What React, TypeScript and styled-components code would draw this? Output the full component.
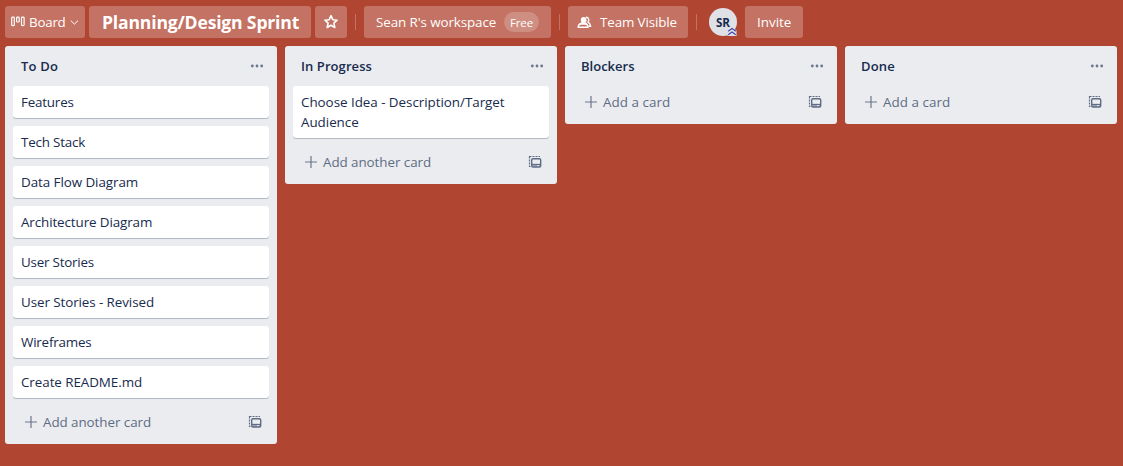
import React from "react";
import styled, { createGlobalStyle } from "styled-components";

const GlobalStyle = createGlobalStyle`
  * { box-sizing: border-box; }
  body {
    margin: 0;
    background: #b04632;
    color: #172b4d;
    font-family: "Open Sans", "Noto Sans", sans-serif;
    font-size: 13.4px;
    line-height: 20px;
    overflow: hidden;
  }
`;

const Board = styled.main`
  min-height: 466px;
`;

const Toolbar = styled.header`
  display: flex;
  align-items: center;
  height: 46px;
  padding: 6px 5px 8px;
  color: #fff;
`;

const ToolButton = styled.button<{ $width: number; $inset: number; $gap?: number }>`
  display: flex;
  align-items: center;
  flex: none;
  gap: ${(p) => p.$gap ?? 0}px;
  width: ${(p) => p.$width}px;
  height: 32px;
  margin-right: 4px;
  padding: 0 0 0 ${(p) => p.$inset}px;
  border: 0;
  border-radius: 3px;
  background: rgba(255, 255, 255, 0.24);
  color: #fff;
  font: inherit;
  white-space: nowrap;
`;

const Label = styled.span<{ $track?: number }>`
  letter-spacing: ${(p) => p.$track ?? 0}px;
  white-space: nowrap;
`;

const BoardTitle = styled.h1`
  margin: 0;
  font-size: 17.6px;
  font-weight: 700;
  line-height: 24px;
  letter-spacing: -0.19px;
`;

const Divider = styled.span<{ $after: number }>`
  flex: none;
  width: 1px;
  height: 16px;
  margin: 0 ${(p) => p.$after}px 0 4px;
  background: rgba(255, 255, 255, 0.24);
`;

const Plan = styled.span`
  width: 35px;
  height: 20px;
  margin-left: auto;
  margin-right: 12px;
  border-radius: 10px;
  background: rgba(255, 255, 255, 0.2);
  font-size: 11.5px;
  line-height: 21px;
  letter-spacing: -0.15px;
  text-align: center;
`;

const Avatar = styled.span`
  position: relative;
  flex: none;
  width: 28px;
  height: 28px;
  margin-right: 8px;
  border-radius: 50%;
  background: #dfe1e6;
  color: #172b4d;
  font-size: 11.7px;
  font-weight: 700;
  line-height: 29px;
  text-align: center;
`;

const AdminBadge = styled.svg`
  position: absolute;
  right: 0;
  bottom: 0;
`;

const Lists = styled.div`
  display: flex;
  align-items: flex-start;
  gap: 8px;
  padding: 0 5px;
`;

const ListPanel = styled.section`
  flex: none;
  width: 272px;
  padding: 0 8px;
  border-radius: 3px;
  background: #ebecf0;
`;

const ListHeader = styled.div`
  display: flex;
  align-items: center;
  justify-content: space-between;
  height: 40px;
  padding: 0 5px 0 8px;
`;

const ListTitle = styled.h2<{ $track?: number }>`
  margin: 0;
  font-size: 13px;
  font-weight: 600;
  line-height: 20px;
  letter-spacing: ${(p) => p.$track ?? 0}px;
`;

const Card = styled.article<{ $track?: number }>`
  margin-bottom: 8px;
  padding: 6px 8px;
  border-radius: 3px;
  background: #fff;
  box-shadow: 0 1px 0 rgba(9, 30, 66, 0.25);
  letter-spacing: ${(p) => p.$track ?? 0}px;
`;

const ListFooter = styled.div`
  display: flex;
  align-items: center;
  gap: 6px;
  height: 38px;
  padding: 0 7px 6px 12px;
  color: #5e6c84;
`;

const TemplateIcon = styled.svg`
  margin-left: auto;
`;

const BoardGlyph = () => (
  <svg width="14" height="12" viewBox="0 0 14 12" fill="none" stroke="#fff" strokeWidth="1.2">
    <rect x="0.7" y="1.2" width="2.6" height="8.4" rx="0.8" />
    <rect x="5.6" y="1.2" width="2.6" height="4.8" rx="0.8" />
    <rect x="10.500" y="1.2" width="2.6" height="8.4" rx="0.8" />
  </svg>
);

const Chevron = () => (
  <svg width="9" height="6" viewBox="0 0 9 6" fill="none" stroke="#fff" strokeWidth="1">
    <path d="M0.8 1.6 4.4 5.1 8 1.6" />
  </svg>
);

const Star = () => (
  <svg width="16" height="16" viewBox="0 0 16 16" fill="none" stroke="#fff" strokeWidth="1.6" strokeLinejoin="round">
    <path d="m8 1.7 1.8 4 4.300.5-3.200 2.900.9 4.400L8 11.300l-3.800 2.200.9-4.400L1.900 6.200l4.300-.5z" />
  </svg>
);

const Team = () => (
  <svg width="15" height="13" viewBox="0 0 15 13" fill="none" stroke="#fff">
    <circle cx="6.7" cy="3.9" r="2.900" fill="#fff" stroke="none" />
    <path d="M1.100 11.300c.3-2.600 2-4.300 5.100-4.300s4.600 1.700 4.900 4.300z" strokeWidth="1.500" strokeLinejoin="round" />
    <path d="M3.800 6.800h5.600l.6 1.900H2.400z" fill="#fff" stroke="none" />
    <path d="M9 1.200c2.800-.1 3.500 2.900 2 4.900 1.500.8 2.400 2 2.700 4.200h-1.800" strokeWidth="1.400" strokeLinejoin="round" />
  </svg>
);

const Dots = () => (
  <svg width="14" height="4" viewBox="0 0 14 4" fill="#6b778c">
    <circle cx="2.3" cy="2" r="1.4" />
    <circle cx="7" cy="2" r="1.4" />
    <circle cx="11.7" cy="2" r="1.4" />
  </svg>
);

const Plus = () => (
  <svg width="12" height="12" viewBox="0 0 12 12" stroke="#6b778c" strokeWidth="1.2">
    <path d="M6 0v12M0 6h12" />
  </svg>
);

const Template = () => (
  <TemplateIcon width="14" height="14" viewBox="0 0 14 14" fill="none" stroke="#5e6c84">
    <path d="M2.500 11.500H1.500v-1M1.500 9.500v-2M1.500 6.500v-2M1.500 3.500v-2h2M4.500 1.500h2M7.500 1.500h2M10.500 1.500h1.500" strokeWidth="1.200" />
    <rect x="3.700" y="3.700" width="9" height="8.300" rx="1.300" strokeWidth="1.400" />
    <path d="M3.700 9.500h9" strokeWidth="1.300" />
    <path d="M4.500 11h4.500M11 11h1.500" strokeWidth="1.200" />
  </TemplateIcon>
);

type Item = { text: string; track?: number };
type List = { title: string; track?: number; cards: Item[] };

const lists: List[] = [
  {
    title: "To Do",
    track: 0.2,
    cards: [
      { text: "Features", track: -0.2 },
      { text: "Tech Stack", track: -0.2 },
      { text: "Data Flow Diagram", track: -0.06 },
      { text: "Architecture Diagram", track: -0.1 },
      { text: "User Stories", track: -0.22 },
      { text: "User Stories - Revised", track: -0.08 },
      { text: "Wireframes", track: -0.2 },
      { text: "Create README.md", track: -0.06 },
    ],
  },
  {
    title: "In Progress",
    track: 0.08,
    cards: [{ text: "Choose Idea - Description/Target Audience", track: -0.03 }],
  },
  { title: "Blockers", cards: [] },
  { title: "Done", track: 0.2, cards: [] },
];

export default function App() {
  return (
    <Board>
      <GlobalStyle />
      <Toolbar>
        <ToolButton $width={80} $inset={6} $gap={4}>
          <BoardGlyph />
          <Label $track={-0.25}>Board</Label>
          <Chevron />
        </ToolButton>
        <ToolButton $width={222} $inset={13}>
          <BoardTitle>Planning/Design Sprint</BoardTitle>
        </ToolButton>
        <ToolButton $width={32} $inset={8}>
          <Star />
        </ToolButton>
        <Divider $after={8} />
        <ToolButton $width={187} $inset={12}>
          <Label $track={-0.1}>Sean R's workspace</Label>
          <Plan>Free</Plan>
        </ToolButton>
        <Divider $after={8} />
        <ToolButton $width={120} $inset={9} $gap={8}>
          <Team />
          <Label $track={-0.12}>Team Visible</Label>
        </ToolButton>
        <Divider $after={12} />
        <Avatar>
          SR
          <AdminBadge width="10" height="9" viewBox="0 0 10 9" fill="none" stroke="#3f46ad" strokeWidth="1.2">
            <path d="M5 0.500 9.500 3.500V9h-9V3.500z" fill="#dfe1e6" stroke="none" />
            <path d="M1.200 4.200 5 1.600l3.800 2.600M1.200 7.700 5 5.100l3.800 2.600" />
          </AdminBadge>
        </Avatar>
        <ToolButton $width={58} $inset={12}>
          <Label>Invite</Label>
        </ToolButton>
      </Toolbar>
      <Lists>
        {lists.map((list) => (
          <ListPanel key={list.title}>
            <ListHeader>
              <ListTitle $track={list.track}>{list.title}</ListTitle>
              <Dots />
            </ListHeader>
            {list.cards.map((card) => (
              <Card key={card.text} $track={card.track}>
                {card.text}
              </Card>
            ))}
            <ListFooter>
              <Plus />
              <Label $track={list.cards.length ? -0.06 : 0.06}>
                {list.cards.length ? "Add another card" : "Add a card"}
              </Label>
              <Template />
            </ListFooter>
          </ListPanel>
        ))}
      </Lists>
    </Board>
  );
}
